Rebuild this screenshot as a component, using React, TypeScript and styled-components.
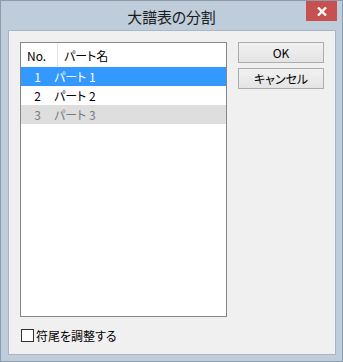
import React from 'react';
import styled, { createGlobalStyle } from 'styled-components';

const GlobalStyle = createGlobalStyle`
  html, body {
    margin: 0;
    padding: 0;
    background: #ffffff;
  }
  body {
    font-family: "Noto Sans CJK JP", "Noto Sans", sans-serif;
    font-feature-settings: "palt";
  }
`;

const Window = styled.div`
  width: 343px;
  height: 362px;
  box-sizing: border-box;
  border: 1px solid #8c9bad;
  background: #bfcddb;
  display: flex;
  flex-direction: column;
`;

const TitleBar = styled.div`
  position: relative;
  height: 29px;
  display: flex;
  align-items: center;
  justify-content: center;
`;

const Title = styled.span`
  font-size: 15px;
  color: #1c1c1c;
  letter-spacing: -0.2px;
  margin-top: 1px;
`;

const CloseButton = styled.div`
  position: absolute;
  top: 0;
  right: 5px;
  width: 31px;
  height: 20px;
  background: #c75050;
  display: flex;
  align-items: center;
  justify-content: center;
`;

const Client = styled.div`
  flex: 1;
  margin: 0 6px 6px 7px;
  border: 1px solid #a7b5c5;
  background: #f0f0f0;
  padding: 11px 11px 12px 11px;
  display: flex;
  flex-direction: column;
  gap: 12px;
  font-size: 12px;
  color: #000;
`;

const Main = styled.div`
  display: flex;
  gap: 11px;
  height: 275px;
`;

const List = styled.div`
  flex: 1;
  box-sizing: border-box;
  border: 1px solid #828790;
  background: #ffffff;
  display: flex;
  flex-direction: column;
`;

const HeaderRow = styled.div`
  display: flex;
  height: 24px;
  align-items: stretch;
`;

const HeaderCell = styled.div<{ $w?: number }>`
  ${(p) => (p.$w ? `width: ${p.$w}px;` : 'flex: 1;')}
  padding-left: 6px;
  display: flex;
  align-items: center;
  border-right: ${(p) => (p.$w ? '1px solid #e5e5e5' : 'none')};
`;

const Row = styled.div<{ $state?: 'selected' | 'disabled' }>`
  display: flex;
  height: 19px;
  align-items: center;
  background: ${(p) =>
    p.$state === 'selected' ? '#3399ff' : p.$state === 'disabled' ? '#dedede' : 'transparent'};
  color: ${(p) =>
    p.$state === 'selected' ? '#ffffff' : p.$state === 'disabled' ? '#7a7a7a' : '#000000'};
`;

const NumCell = styled.div`
  width: 31px;
  box-sizing: border-box;
  text-align: right;
  padding-right: 11px;
`;

const NameCell = styled.div`
  flex: 1;
  padding-left: 2px;
`;

const Buttons = styled.div`
  width: 86px;
  display: flex;
  flex-direction: column;
  gap: 5px;
`;

const Button = styled.div`
  height: 21px;
  box-sizing: border-box;
  border: 1px solid #adadad;
  background: linear-gradient(#f1f1f1, #e4e4e4);
  display: flex;
  align-items: center;
  justify-content: center;
  font-size: 12px;
`;

const Footer = styled.label`
  display: flex;
  align-items: center;
  gap: 2px;
  height: 13px;
  padding-left: 1px;
`;

const Box = styled.span`
  width: 13px;
  height: 13px;
  box-sizing: border-box;
  border: 1px solid #333333;
  background: #ffffff;
`;

const parts = [
  { no: 1, name: 'パート 1', state: 'selected' as const },
  { no: 2, name: 'パート 2' },
  { no: 3, name: 'パート 3', state: 'disabled' as const },
];

export default function App() {
  return (
    <>
      <GlobalStyle />
      <Window>
        <TitleBar>
          <Title>大譜表の分割</Title>
          <CloseButton>
            <svg width="10" height="9" viewBox="0 0 10 9">
              <path d="M1 0.5 L9 8.5 M9 0.5 L1 8.5" stroke="#ffffff" strokeWidth="2.4" />
            </svg>
          </CloseButton>
        </TitleBar>
        <Client>
          <Main>
            <List>
              <HeaderRow>
                <HeaderCell $w={30}>No.</HeaderCell>
                <HeaderCell>パート名</HeaderCell>
              </HeaderRow>
              {parts.map((p) => (
                <Row key={p.no} $state={p.state}>
                  <NumCell>{p.no}</NumCell>
                  <NameCell>{p.name}</NameCell>
                </Row>
              ))}
            </List>
            <Buttons>
              <Button>OK</Button>
              <Button>キャンセル</Button>
            </Buttons>
          </Main>
          <Footer>
            <Box />
            <span>符尾を調整する</span>
          </Footer>
        </Client>
      </Window>
    </>
  );
}
